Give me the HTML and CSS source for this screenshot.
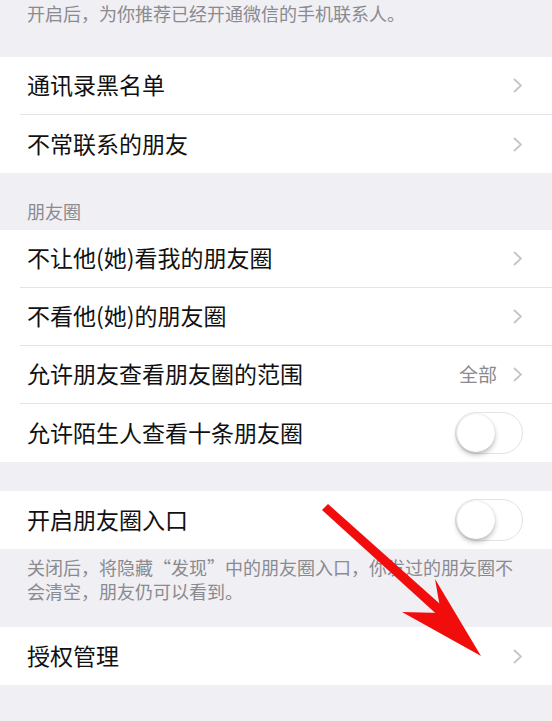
FILE: index.html
```html
<!DOCTYPE html>
<html lang="zh-CN">
<head>
    <meta charset="UTF-8">
    <meta name="viewport" content="width=device-width, initial-scale=1.0">
    <title>朋友圈设置</title>
    <link rel="stylesheet" href="styles.css">
</head>
<body>
    <div class="note note-top">开启后，为你推荐已经开通微信的手机联系人。</div>

    <div class="group">
        <div class="row">
            <span class="label">通讯录黑名单</span>
            <svg class="chev" viewBox="0 0 9 15"><polyline points="1,1 8,7.5 1,14"/></svg>
        </div>
        <div class="row">
            <span class="label">不常联系的朋友</span>
            <svg class="chev" viewBox="0 0 9 15"><polyline points="1,1 8,7.5 1,14"/></svg>
        </div>
    </div>

    <div class="section-title">朋友圈</div>

    <div class="group">
        <div class="row">
            <span class="label">不让他(她)看我的朋友圈</span>
            <svg class="chev" viewBox="0 0 9 15"><polyline points="1,1 8,7.5 1,14"/></svg>
        </div>
        <div class="row">
            <span class="label">不看他(她)的朋友圈</span>
            <svg class="chev" viewBox="0 0 9 15"><polyline points="1,1 8,7.5 1,14"/></svg>
        </div>
        <div class="row">
            <span class="label">允许朋友查看朋友圈的范围</span>
            <span class="value">全部</span>
            <svg class="chev" viewBox="0 0 9 15"><polyline points="1,1 8,7.5 1,14"/></svg>
        </div>
        <div class="row">
            <span class="label">允许陌生人查看十条朋友圈</span>
            <div class="switch"><div class="knob"></div></div>
        </div>
    </div>

    <div class="gap"></div>

    <div class="group">
        <div class="row">
            <span class="label">开启朋友圈入口</span>
            <div class="switch"><div class="knob"></div></div>
        </div>
    </div>

    <div class="note">关闭后，将隐藏“发现”中的朋友圈入口，你发过的朋友圈不会清空，朋友仍可以看到。</div>

    <div class="group">
        <div class="row">
            <span class="label">授权管理</span>
            <svg class="chev" viewBox="0 0 9 15"><polyline points="1,1 8,7.5 1,14"/></svg>
        </div>
    </div>

    <!-- 标注箭头 -->
    <svg class="arrow" viewBox="0 0 552 721" width="552" height="721">
        <path d="M322 510 L328 504 L449 612 L443 620 Z"/>
        <path d="M435 579 L481 656 L402 612 L441 613 Z"/>
    </svg>
</body>
</html>
```

FILE: styles.css
```css
body {
    margin: 0;
    min-height: 100vh;
    background-color: #efeff4;
    font-family: "Noto Sans CJK SC", sans-serif;
    color: #111;
    position: relative;
    overflow: hidden;
}
.note {
    color: #8a8a8f;
    font-size: 18px;
    line-height: 24px;
    padding: 6px 27px 24px;
}
.note-top {
    padding: 1px 27px 32px;
}
.section-title {
    color: #8a8a8f;
    font-size: 18px;
    line-height: 24px;
    padding: 26px 27px 7px;
}
.gap {
    height: 29px;
}
.group {
    background-color: #fff;
}
.row {
    display: flex;
    align-items: center;
    height: 58px;
    box-sizing: border-box;
    margin-left: 20px;
    padding: 0 30px 3px 7px;
    border-bottom: 1px solid #e4e4e8;
}
.row:last-child {
    border-bottom: none;
}
.label {
    flex: 1;
    font-size: 23px;
}
.value {
    color: #8a8a8f;
    font-size: 19px;
    margin-right: 16px;
}
.chev {
    width: 9px;
    height: 15px;
    margin-top: 3px;
    fill: none;
    stroke: #c4c4c9;
    stroke-width: 1.8;
}
.switch {
    width: 68px;
    height: 42px;
    box-sizing: border-box;
    margin-top: 3px;
    border: 1.5px solid #e3e3e6;
    border-radius: 21px;
    background-color: #fff;
    padding: 0.5px;
    margin-right: -1px;
}
.knob {
    width: 38px;
    height: 38px;
    border-radius: 50%;
    background-color: #fff;
    box-shadow: 0 3px 5px rgba(0, 0, 0, 0.25), 0 0 1px rgba(0, 0, 0, 0.2);
}
.arrow {
    position: absolute;
    left: 0;
    top: 0;
    pointer-events: none;
    fill: #f20d0d;
}
```
